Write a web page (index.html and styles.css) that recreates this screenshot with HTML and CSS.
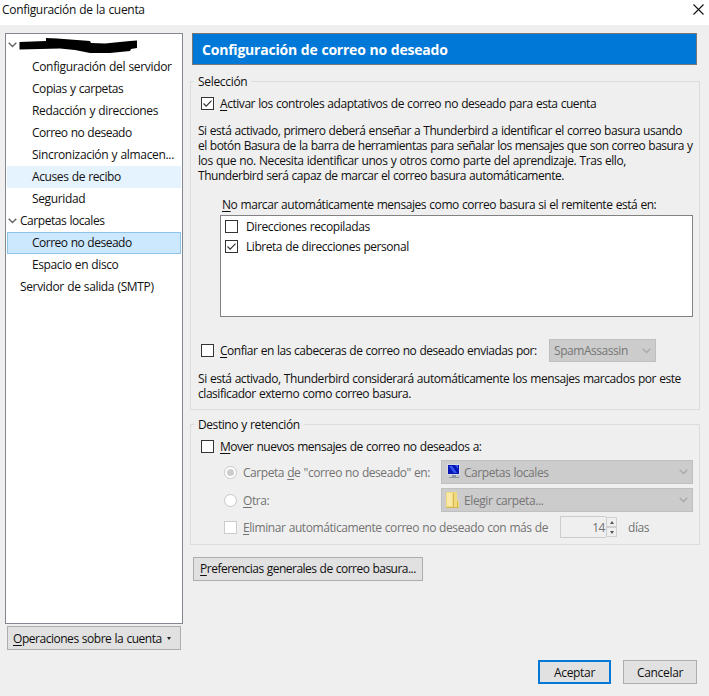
FILE: index.html
```html
<!DOCTYPE html>
<html lang="es">
<head>
<meta charset="utf-8">
<title>Configuración de la cuenta</title>
<link rel="stylesheet" href="styles.css">
</head>
<body>
<div class="window">
  <header class="titlebar">
    <span class="ls-26">Configuración de la cuenta</span>
    <svg class="close" width="11" height="11" viewBox="0 0 11 11"><path d="M.5.5l10 10M10.500.5l-10 10"/></svg>
  </header>
  <div class="content">
    <aside class="sidebar">
      <ul class="tree">
        <li class="row root">
          <svg class="twisty" width="9" height="6" viewBox="0 0 9 6"><path d="M.7.8l3.800 3.800L8.300.8"/></svg>
          <svg class="scribble" width="118" height="16" viewBox="0 0 118 16"><path d="M.5 5L27 4V1l11 .5L71 4l1 2 14 .5L111 4l7-.5V11l-6 1-1 2-20 2H71l-15-3-15-1.500L.5 12.500z"/></svg>
        </li>
        <li class="row child ls-28">Configuración del servidor</li>
        <li class="row child">Copias y carpetas</li>
        <li class="row child ls-30">Redacción y direcciones</li>
        <li class="row child ls-43">Correo no deseado</li>
        <li class="row child ls-28">Sincronización y almacen...</li>
        <li class="row child hover ls-33">Acuses de recibo</li>
        <li class="row child ls-30">Seguridad</li>
        <li class="row root">
          <svg class="twisty" width="9" height="6" viewBox="0 0 9 6"><path d="M.7.8l3.800 3.800L8.300.8"/></svg>
          <span>Carpetas locales</span>
        </li>
        <li class="row child selected ls-43">Correo no deseado</li>
        <li class="row child ls-33">Espacio en disco</li>
        <li class="row leaf ls-30">Servidor de salida (SMTP)</li>
      </ul>
      <button class="button ops ls-40"><span><u>O</u>peraciones sobre la cuenta</span><i class="caret"></i></button>
    </aside>
    <main class="panel">
      <h1 class="heading">Configuración de correo no deseado</h1>

      <section class="group selection">
        <h2 class="legend"><span class="ls-26">Selección</span></h2>
        <label class="line activate">
          <svg class="check" width="13" height="13" viewBox="0 0 13 13"><rect x=".5" y=".5" width="12" height="12"/><path d="M2.500 6.500l2.700 2.700 5.300-5.500"/></svg>
          <span><u>A</u>ctivar los controles adaptativos de correo no deseado para esta cuenta</span>
        </label>
        <p class="note">
          <span class="ls-40">Si está activado, primero deberá enseñar a Thunderbird a identificar el correo basura usando</span>
          <span class="ls-44">el botón Basura de la barra de herramientas para señalar los mensajes que son correo basura y</span>
          <span class="ls-35">los que no. Necesita identificar unos y otros como parte del aprendizaje. Tras ello,</span>
          <span class="ls-40">Thunderbird será capaz de marcar el correo basura automáticamente.</span>
        </p>
        <div class="whitelist-label"><u>N</u>o marcar automáticamente mensajes como correo basura si el remitente está en:</div>
        <div class="listbox">
          <label class="item">
            <svg class="check" width="13" height="13" viewBox="0 0 13 13"><rect x=".5" y=".5" width="12" height="12"/></svg>
            <span class="ls-33">Direcciones recopiladas</span>
          </label>
          <label class="item">
            <svg class="check" width="13" height="13" viewBox="0 0 13 13"><rect x=".5" y=".5" width="12" height="12"/><path d="M2.500 6.500l2.700 2.700 5.300-5.500"/></svg>
            <span>Libreta de direcciones personal</span>
          </label>
        </div>
        <div class="line trust">
          <svg class="check" width="13" height="13" viewBox="0 0 13 13"><rect x=".5" y=".5" width="12" height="12"/></svg>
          <span class="trust-text ls-39"><u>C</u>onfiar en las cabeceras de correo no deseado enviadas por:</span>
          <div class="select small"><span>SpamAssassin</span><svg class="arrow" width="9" height="6" viewBox="0 0 9 6"><path d="M.7.8l3.800 3.800L8.300.8"/></svg></div>
        </div>
        <p class="note second">
          <span>Si está activado, Thunderbird considerará automáticamente los mensajes marcados por este</span>
          <span>clasificador externo como correo basura.</span>
        </p>
      </section>

      <section class="group destination">
        <h2 class="legend"><span class="ls-35">Destino y retención</span></h2>
        <label class="line move">
          <svg class="check" width="13" height="13" viewBox="0 0 13 13"><rect x=".5" y=".5" width="12" height="12"/></svg>
          <span class="ls-40"><u>M</u>over nuevos mensajes de correo no deseados a:</span>
        </label>
        <div class="option">
          <svg class="radio" width="13" height="13" viewBox="0 0 13 13"><circle cx="6.500" cy="6.500" r="6"/><circle class="dot" cx="6.500" cy="6.500" r="3.500"/></svg>
          <span class="option-text">Carpeta <u>d</u>e "correo no deseado" en:</span>
          <div class="select wide">
            <svg class="icon computer" width="16" height="16" viewBox="0 0 16 16"><path fill="#d6dbe3" d="M2 0h13v11H2z"/><path fill="#0717b5" d="M3 1h11v9H3z"/><path fill="#3658ef" d="M4 2h3l5 7H9zM10 1h3v4z"/><path fill="#8c969f" d="M7 11h4v2H7zM4 13h10v1H4z"/><path fill="#bcc2c7" d="M12 11h3v2h-3z"/></svg>
            <span>Carpetas locales</span><svg class="arrow" width="9" height="6" viewBox="0 0 9 6"><path d="M.7.8l3.800 3.800L8.300.8"/></svg>
          </div>
        </div>
        <div class="option">
          <svg class="radio" width="13" height="13" viewBox="0 0 13 13"><circle cx="6.500" cy="6.500" r="6"/></svg>
          <span class="option-text"><u>O</u>tra:</span>
          <div class="select wide">
            <svg class="icon" width="16" height="16" viewBox="0 0 16 16"><path fill="#f1d980" d="M1 0h7v15l-7 1zM8 0h4v8l2 1v7H8z"/><path fill="#f9e9a5" d="M2 1h5v13H2z"/><path fill="#d6b64f" d="M8 1h1v14H8zM1 15h13v1H1zM12 9h1v6h-1z"/></svg>
            <span class="ls-33">Elegir carpeta...</span><svg class="arrow" width="9" height="6" viewBox="0 0 9 6"><path d="M.7.8l3.800 3.800L8.300.8"/></svg>
          </div>
        </div>
        <div class="option purge">
          <svg class="check disabled" width="13" height="13" viewBox="0 0 13 13"><rect x=".5" y=".5" width="12" height="12"/></svg>
          <span class="purge-text ls-35"><u>E</u>liminar automáticamente correo no deseado con más de</span>
          <div class="number">14</div>
          <div class="spinner"><span><i class="up"></i></span><span><i class="down"></i></span></div>
          <span class="days">días</span>
        </div>
      </section>

      <button class="button prefs ls-44"><span><u>P</u>referencias generales de correo basura...</span></button>
    </main>
  </div>
  <footer class="actions">
    <button class="button primary ls-26">Aceptar</button>
    <button class="button cancel ls-26">Cancelar</button>
  </footer>
</div>
</body>
</html>
```

FILE: styles.css
```css
* { box-sizing: border-box; }
body {
  margin: 0;
  font: 12px/15px "Open Sans", "Noto Sans", sans-serif;
  letter-spacing: -.45px;
  word-spacing: .5px;
  color: #101010;
}
.ls-26 { letter-spacing: -.31px; }
.ls-28 { letter-spacing: -.33px; }
.ls-30 { letter-spacing: -.35px; }
.ls-33 { letter-spacing: -.4px; }
.ls-35 { letter-spacing: -.42px; }
.ls-39 { letter-spacing: -.47px; }
.ls-40 { letter-spacing: -.47px; }
.ls-43 { letter-spacing: -.5px; }
.ls-44 { letter-spacing: -.52px; }

span, div, li, label { white-space: nowrap; }
svg { display: block; flex: none; }
u { text-decoration-thickness: 1px; text-underline-offset: 2px; text-decoration-skip-ink: none; }

.window {
  width: 709px;
  height: 696px;
  background: #efefef;
  display: flex;
  flex-direction: column;
  overflow: hidden;
}
.titlebar {
  height: 25px;
  background: #fff;
  display: flex;
  justify-content: space-between;
  padding: 2px 5px 0 2px;
}
.close { margin-top: 2px; fill: none; stroke: #111; stroke-width: 1.1; }
.content { display: flex; height: 627px; padding: 8px 0 0 5px; }

.sidebar { width: 178px; display: flex; flex-direction: column; }
.tree {
  height: 591px;
  margin: 0;
  padding: 0 1px;
  list-style: none;
  background: #fff;
  border: 1px solid #828790;
}
.row { height: 22px; display: flex; align-items: center; border: 1px solid transparent; padding-bottom: 2px; }
.child { padding-left: 24px; }
.leaf { padding-left: 12px; }
.root { gap: 3px; }
.hover { background: #e5f3ff; }
.selected { background: #cce8ff; border-color: #8ec3ea; }
.twisty { fill: none; stroke: #666; stroke-width: 1.4; margin-top: 2px; }
.scribble { margin: 2px 0 0 -1px; fill: #000; }

.button {
  font-family: inherit;
  font-size: 12px;
  line-height: 15px;
  word-spacing: inherit;
  color: #101010;
  background: #e1e1e1;
  border: 1px solid #adadad;
  border-radius: 0;
  padding: 0;
  display: flex;
  align-items: center;
  justify-content: center;
  height: 24px;
  white-space: nowrap;
}
.ops { width: 174px; margin: 2px 0 0 2px; gap: 5px; justify-content: flex-start; padding-left: 5px; }
.caret { border: 2.5px solid transparent; border-top: 3px solid #222; border-bottom: 0; }

.panel { margin-left: 7px; width: 512px; }
.heading {
  margin: 0 0 0 2px;
  width: 505px;
  height: 32px;
  padding-left: 9px;
  background: #0078d7;
  border: 1px solid #7a7772;
  color: #fff;
  font-size: 14px;
  font-weight: 700;
  line-height: 31px;
  letter-spacing: -.22px;
}
.group { width: 510px; border: 1px solid #dcdcdc; }
.legend {
  height: 15px;
  margin: -8px 0 0 3px;
  font-size: 12px;
  font-weight: 400;
  line-height: 15px;
}
.legend span { display: inline-block; background: #efefef; padding: 0 4px; }
.selection { height: 329px; margin-top: 16px; }
.line { display: flex; align-items: center; gap: 6px; padding-left: 10px; }
.activate { margin-top: 7px; height: 15px; }
.check { fill: #fff; stroke: #333; }
.check path { fill: none; stroke: #333; stroke-width: 1.2; }
.disabled { stroke: #ccc; }
.note { margin: 12px 0 0 7px; }
.note span { display: block; }
.whitelist-label { margin: 14px 0 0 31px; }
.listbox {
  width: 473px;
  height: 102px;
  margin: 3px 0 0 29px;
  background: #fff;
  border: 1px solid #828282;
}
.item { height: 20px; display: flex; align-items: center; gap: 8px; padding-left: 4px; }
.trust { height: 23px; margin-top: 22px; }
.trust-text { width: 323px; }
.select {
  height: 24px;
  background: #ccc;
  border: 1px solid #bfbfbf;
  color: #767676;
  display: flex;
  align-items: center;
}
.small { width: 107px; height: 23px; padding: 0 4px; }
.arrow { margin-left: auto; fill: none; stroke: #aaa; stroke-width: 1.4; }
.second { margin-top: 9px; }

.destination { height: 121px; margin-top: 14px; }
.move { margin-top: 7px; height: 15px; }
.option { display: flex; align-items: center; height: 24px; padding-left: 33px; color: #737373; margin-top: 4px; }
.move + .option { margin-top: 6px; }
.radio { fill: #fff; stroke: #c6c6c6; }
.radio .dot { fill: #ccc; stroke: none; }
.option-text { width: 198px; margin-left: 6px; }
.wide { width: 252px; padding: 0 4px 0 3px; gap: 3px; }
.purge { margin-top: 3px; }
.purge-text { width: 317px; margin-left: 6px; }
.number {
  width: 46px;
  height: 22px;
  border: 1px solid #ccc;
  border-right: 0;
  text-align: right;
  line-height: 21px;
  padding-right: 1px;
}
.spinner { width: 11px; height: 20px; display: flex; flex-direction: column; }
.spinner span { flex: 1; display: flex; align-items: center; justify-content: center; border: 1px solid #d0d0d0; }
.up, .down { border: 2.5px solid transparent; }
.up { border-top: 0; border-bottom: 3px solid #555; }
.down { border-bottom: 0; border-top: 3px solid #555; }
.days { margin-left: 11px; }
.prefs { width: 230px; margin: 12px 0 0 3px; padding-bottom: 1px; }

.actions { display: flex; justify-content: flex-end; gap: 12px; padding: 8px 12px 0 0; }
.primary { width: 73px; border: 2px solid #0078d7; }
.cancel { width: 74px; }
```
